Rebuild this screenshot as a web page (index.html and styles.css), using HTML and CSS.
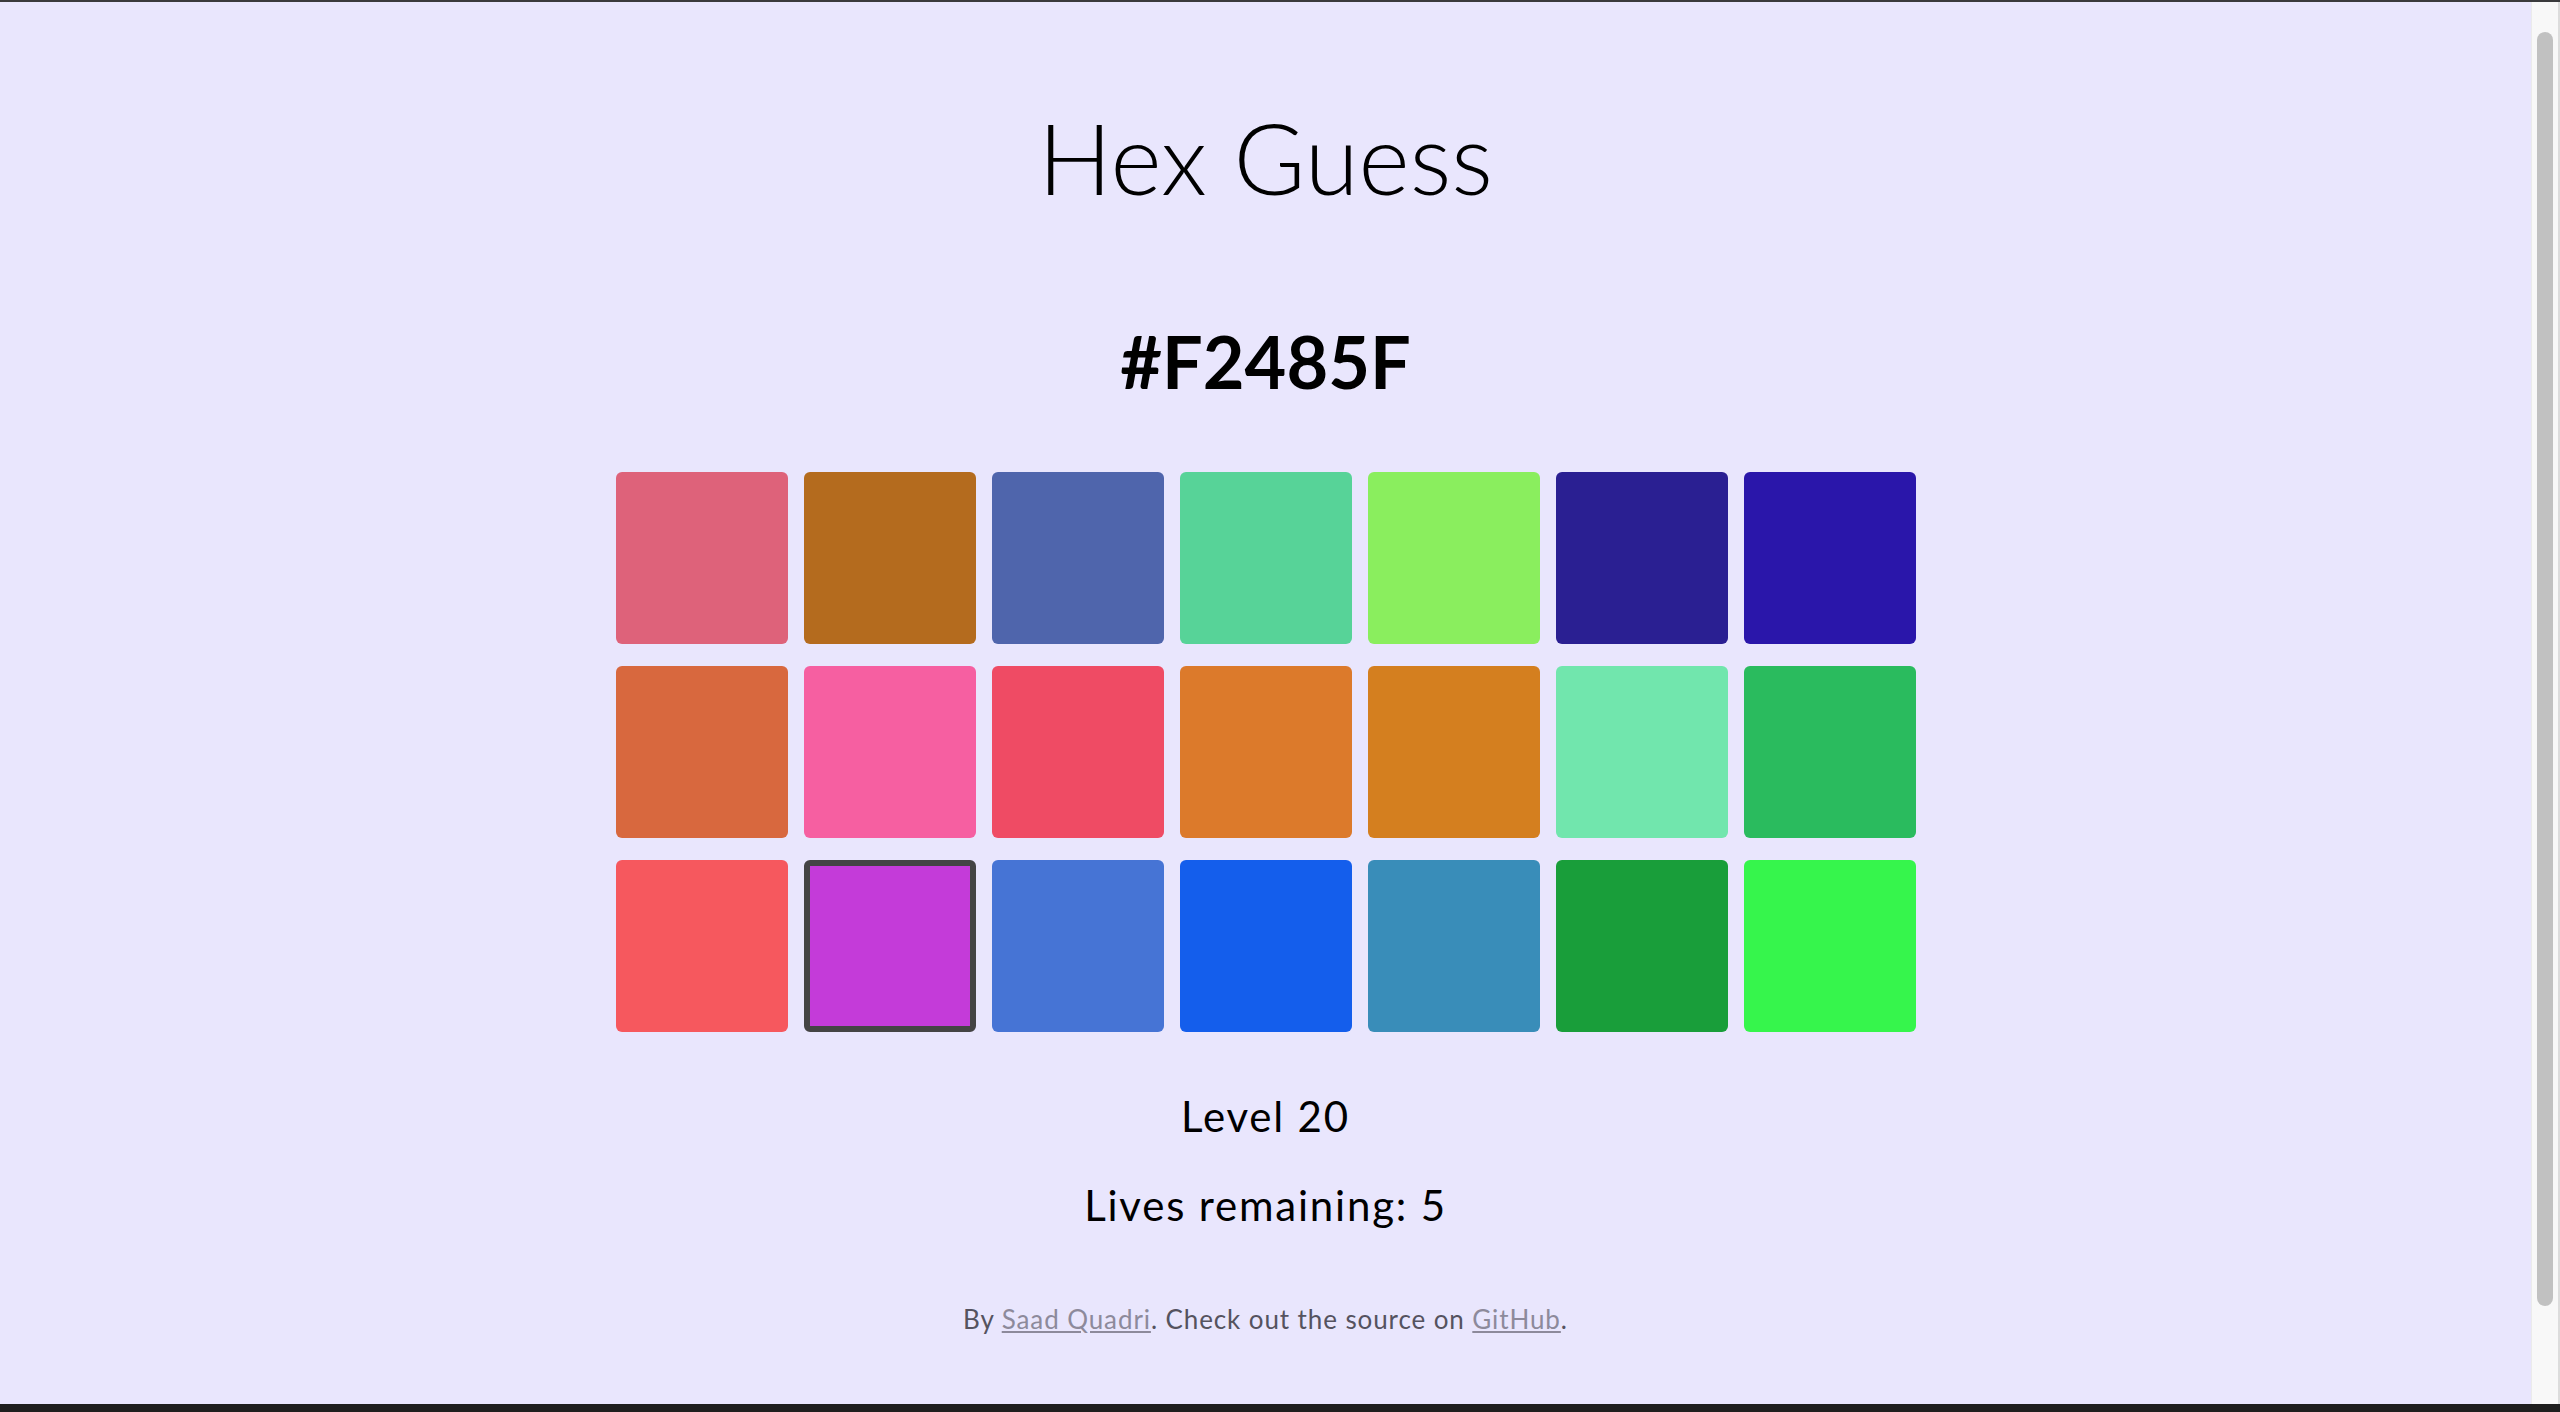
FILE: index.html
```html
<!DOCTYPE html>
<html lang="en">
<head>
  <meta charset="UTF-8">
  <meta name="viewport" content="width=device-width, initial-scale=1.0">
  <title>Hex Guess</title>
  <link rel="stylesheet" href="styles.css">
</head>
<body>

<div class="window">
  <div class="page">
    <h1 class="title">Hex Guess</h1>
    <div class="target">#F2485F</div>

    <div class="swatches">
      <div class="swatch" style="background-color: #de627a"></div>
      <div class="swatch" style="background-color: #b46b1e"></div>
      <div class="swatch" style="background-color: #4f65ac"></div>
      <div class="swatch" style="background-color: #57d398"></div>
      <div class="swatch" style="background-color: #8aee5e"></div>
      <div class="swatch" style="background-color: #2a1f92"></div>
      <div class="swatch" style="background-color: #2a16aa"></div>

      <div class="swatch" style="background-color: #d8683e"></div>
      <div class="swatch" style="background-color: #f65fa1"></div>
      <div class="swatch" style="background-color: #ef4b64"></div>
      <div class="swatch" style="background-color: #dc7a2b"></div>
      <div class="swatch" style="background-color: #d47f1f"></div>
      <div class="swatch" style="background-color: #71e6ad"></div>
      <div class="swatch" style="background-color: #2abb5e"></div>

      <div class="swatch" style="background-color: #f6585e"></div>
      <div class="swatch selected" style="background-color: #c43bd9"></div>
      <div class="swatch" style="background-color: #4674d5"></div>
      <div class="swatch" style="background-color: #145eec"></div>
      <div class="swatch" style="background-color: #398db9"></div>
      <div class="swatch" style="background-color: #199e3a"></div>
      <div class="swatch" style="background-color: #36f54c"></div>
    </div>

    <p class="level">Level 20</p>
    <p class="lives">Lives remaining: 5</p>

    <p class="footer">By <a href="#">Saad Quadri</a>. Check out the source on <a href="#">GitHub</a>.</p>
  </div>

  <div class="scrollbar">
    <div class="thumb"></div>
  </div>
</div>

</body>
</html>
```

FILE: styles.css
```css
body {
  margin: 0;
  height: 1412px;
  background-color: #1e1e1e;
  font-family: 'Lato', 'Open Sans', sans-serif;
  overflow: hidden;
}

.window {
  display: flex;
  height: 1402px;
  border-top: 2px solid #3a3a3c;
}

.page {
  flex: 1;
  background-color: #e9e6fd;
  text-align: center;
  color: #000;
}

.title {
  font-size: 98px;
  font-weight: 300;
  line-height: 1.2;
  margin: 97px 0 0;
}

.target {
  font-size: 72px;
  font-weight: 700;
  line-height: 1.2;
  margin-top: 101px;
}

.swatches {
  display: grid;
  grid-template-columns: repeat(7, 172px);
  grid-auto-rows: 172px;
  column-gap: 16px;
  row-gap: 22px;
  justify-content: center;
  margin-top: 68px;
}

.swatch {
  border-radius: 6px;
  box-sizing: border-box;
  cursor: pointer;
}

.swatch.selected {
  border: 6px solid #444444;
}

.level,
.lives {
  font-size: 42px;
  line-height: 1.2;
  letter-spacing: 1.8px;
  margin: 0;
}

.level {
  margin-top: 59px;
}

.lives {
  margin-top: 39px;
}

.footer {
  font-size: 26px;
  line-height: 1.2;
  letter-spacing: 0.9px;
  color: #55535f;
  margin: 73px 0 0;
}

.footer a {
  color: #8d8a9b;
}

.scrollbar {
  width: 26px;
  background-color: #f8f8f8;
  border-left: 1px solid #ebebeb;
  border-right: 2px solid #dcdcdc;
}

.thumb {
  width: 16px;
  height: 1274px;
  margin: 30px 0 0 5px;
  border-radius: 8px;
  background-color: #c1c1c1;
}
```
